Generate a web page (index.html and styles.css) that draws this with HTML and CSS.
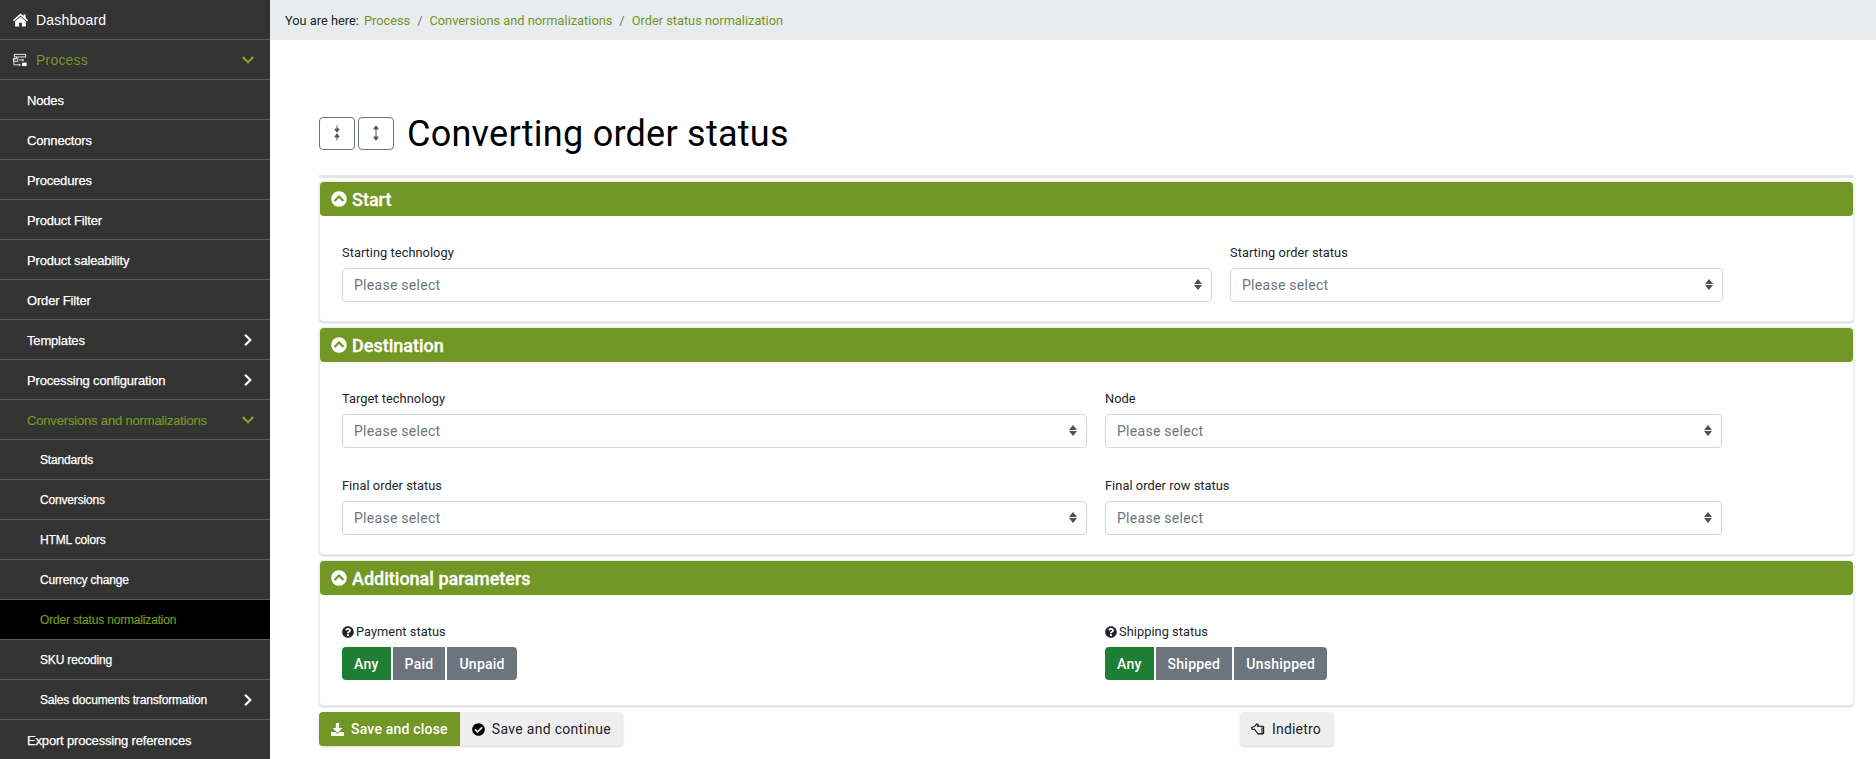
FILE: index.html
```html
<!DOCTYPE html>
<html lang="en">
<head>
<meta charset="utf-8">
<title>Converting order status</title>
<link rel="stylesheet" href="styles.css">
</head>
<body>
<div class="app">
<nav class="side">
  <a class="item top"><svg class="ic-home" viewBox="0 0 16 14"><path d="M8 0 0 7l1 1.200L8 2.400l7 5.800L16 7l-2.600-2.300V1h-2.200v1.800zM2.300 8.300V14h4.200v-4h3v4h4.200V8.300L8 3.600z"/></svg><span>Dashboard</span></a>
  <a class="item top on"><svg class="ic-proc" viewBox="0 0 16 14" fill="none" stroke="#fff" stroke-width="1"><rect x="1.500" y=".5" width="13" height="3"/><path d="M4 3.500v1.500M1 6h2M7 7h5M10.500 5.500 12 7l-1.500 1.500"/><rect x=".5" y="5.500" width="5" height="3"/><path d="M1 8.500v4h7M7 11l1.500 1.500L7 14"/><rect x="11" y="10.500" width="4" height="3" fill="#fff"/></svg><span>Process</span><svg class="chev" viewBox="0 0 12 12"><path d="M1.500 3.500 6 8l4.500-4.500"/></svg></a>
  <a class="item l1">Nodes</a>
  <a class="item l1">Connectors</a>
  <a class="item l1">Procedures</a>
  <a class="item l1">Product Filter</a>
  <a class="item l1">Product saleability</a>
  <a class="item l1">Order Filter</a>
  <a class="item l1"><span>Templates</span><svg class="chev" viewBox="0 0 12 12"><path d="M3.500 1.500 8 6l-4.500 4.500"/></svg></a>
  <a class="item l1"><span>Processing configuration</span><svg class="chev" viewBox="0 0 12 12"><path d="M3.500 1.500 8 6l-4.500 4.500"/></svg></a>
  <a class="item l1 on"><span>Conversions and normalizations</span><svg class="chev" viewBox="0 0 12 12"><path d="M1.500 3.500 6 8l4.500-4.500"/></svg></a>
  <a class="item l2">Standards</a>
  <a class="item l2">Conversions</a>
  <a class="item l2">HTML colors</a>
  <a class="item l2">Currency change</a>
  <a class="item l2 on cur">Order status normalization</a>
  <a class="item l2">SKU recoding</a>
  <a class="item l2"><span>Sales documents transformation</span><svg class="chev" viewBox="0 0 12 12"><path d="M3.500 1.500 8 6l-4.500 4.500"/></svg></a>
  <a class="item l1">Export processing references</a>
</nav>
<main class="main">
  <div class="crumbs"><span class="here">You are here:</span><a>Process</a><i>/</i><a>Conversions and normalizations</a><i>/</i><a>Order status normalization</a></div>
  <div class="content">
    <div class="head">
      <button class="tool"><svg viewBox="0 0 10 16"><path d="M5 .5v4M2.800 4 5 7.200 7.200 4zM5 15.500v-4M2.800 12 5 8.800 7.200 12z"/></svg></button>
      <button class="tool"><svg viewBox="0 0 10 16"><path d="M5 2v12M2.800 4 5 .8 7.200 4zM2.800 12 5 15.200 7.200 12z"/></svg></button>
      <h1>Converting order status</h1>
    </div>
    <div class="rule"></div>

    <section class="card">
      <h2 class="bar"><svg class="ic-up" viewBox="0 0 512 512"><path d="M8 256C8 119 119 8 256 8s248 111 248 248-111 248-248 248S8 393 8 256zm231-113.900L103.500 277.600c-9.400 9.400-9.400 24.600 0 33.900l17 17c9.400 9.400 24.600 9.400 33.900 0L256 226.900l101.600 101.600c9.400 9.400 24.600 9.400 33.900 0l17-17c9.400-9.400 9.400-24.600 0-33.900L273 142.100c-9.300-9.400-24.500-9.400-34 0z"/></svg>Start</h2>
      <div class="body">
        <div class="row r-start">
          <div class="field"><label>Starting technology</label><div class="sel">Please select</div></div>
          <div class="field"><label>Starting order status</label><div class="sel">Please select</div></div>
        </div>
      </div>
    </section>

    <section class="card">
      <h2 class="bar"><svg class="ic-up" viewBox="0 0 512 512"><path d="M8 256C8 119 119 8 256 8s248 111 248 248-111 248-248 248S8 393 8 256zm231-113.900L103.500 277.600c-9.400 9.400-9.400 24.600 0 33.900l17 17c9.400 9.400 24.600 9.400 33.900 0L256 226.900l101.600 101.600c9.400 9.400 24.600 9.400 33.900 0l17-17c9.400-9.400 9.400-24.600 0-33.900L273 142.100c-9.300-9.400-24.500-9.400-34 0z"/></svg>Destination</h2>
      <div class="body">
        <div class="row r-dest">
          <div class="field"><label>Target technology</label><div class="sel">Please select</div></div>
          <div class="field"><label>Node</label><div class="sel">Please select</div></div>
          <div class="field"><label>Final order status</label><div class="sel">Please select</div></div>
          <div class="field"><label>Final order row status</label><div class="sel">Please select</div></div>
        </div>
      </div>
    </section>

    <section class="card">
      <h2 class="bar"><svg class="ic-up" viewBox="0 0 512 512"><path d="M8 256C8 119 119 8 256 8s248 111 248 248-111 248-248 248S8 393 8 256zm231-113.900L103.500 277.600c-9.400 9.400-9.400 24.600 0 33.900l17 17c9.400 9.400 24.600 9.400 33.900 0L256 226.900l101.600 101.600c9.400 9.400 24.600 9.400 33.900 0l17-17c9.400-9.400 9.400-24.600 0-33.900L273 142.100c-9.300-9.400-24.500-9.400-34 0z"/></svg>Additional parameters</h2>
      <div class="body params">
        <div class="row r-dest">
          <div class="field"><label><svg class="ic-q" viewBox="0 0 512 512"><path d="M504 256c0 136.997-111.043 248-248 248S8 392.997 8 256C8 119.083 119.043 8 256 8s248 111.083 248 248zM262.655 90c-54.497 0-89.255 22.957-116.549 63.758-3.536 5.286-2.353 12.415 2.715 16.258l34.699 26.310c5.205 3.947 12.621 3.008 16.665-2.122 17.864-22.658 30.113-35.797 57.303-35.797 20.429 0 45.698 13.148 45.698 32.958 0 14.976-12.363 22.667-32.534 33.976C247.128 238.528 216 254.941 216 296v4c0 6.627 5.373 12 12 12h56c6.627 0 12-5.373 12-12v-1.333c0-28.462 83.186-29.647 83.186-106.667 0-58.002-60.165-102-116.531-102zM256 338c-25.365 0-46 20.635-46 46 0 25.364 20.635 46 46 46s46-20.636 46-46c0-25.365-20.635-46-46-46z"/></svg>Payment status</label>
            <div class="group"><span class="opt act">Any</span><span class="opt">Paid</span><span class="opt">Unpaid</span></div></div>
          <div class="field"><label><svg class="ic-q" viewBox="0 0 512 512"><path d="M504 256c0 136.997-111.043 248-248 248S8 392.997 8 256C8 119.083 119.043 8 256 8s248 111.083 248 248zM262.655 90c-54.497 0-89.255 22.957-116.549 63.758-3.536 5.286-2.353 12.415 2.715 16.258l34.699 26.310c5.205 3.947 12.621 3.008 16.665-2.122 17.864-22.658 30.113-35.797 57.303-35.797 20.429 0 45.698 13.148 45.698 32.958 0 14.976-12.363 22.667-32.534 33.976C247.128 238.528 216 254.941 216 296v4c0 6.627 5.373 12 12 12h56c6.627 0 12-5.373 12-12v-1.333c0-28.462 83.186-29.647 83.186-106.667 0-58.002-60.165-102-116.531-102zM256 338c-25.365 0-46 20.635-46 46 0 25.364 20.635 46 46 46s46-20.636 46-46c0-25.365-20.635-46-46-46z"/></svg>Shipping status</label>
            <div class="group"><span class="opt act">Any</span><span class="opt">Shipped</span><span class="opt">Unshipped</span></div></div>
        </div>
      </div>
    </section>

    <div class="actions">
      <button class="btn primary"><svg viewBox="0 0 512 512"><path d="M216 0h80c13.300 0 24 10.700 24 24v168h87.700c17.800 0 26.700 21.500 14.100 34.100L269.700 378.300c-7.500 7.500-19.800 7.500-27.300 0L90.100 226.100c-12.600-12.600-3.700-34.100 14.100-34.100H192V24c0-13.300 10.700-24 24-24zm296 376v112c0 13.300-10.700 24-24 24H24c-13.300 0-24-10.700-24-24V376c0-13.300 10.700-24 24-24h146.700l49 49c20.100 20.100 52.500 20.100 72.600 0l49-49H488c13.300 0 24 10.700 24 24z"/></svg>Save and close</button>
      <button class="btn light join"><svg viewBox="0 0 512 512"><path d="M504 256c0 136.967-111.033 248-248 248S8 392.967 8 256 119.033 8 256 8s248 111.033 248 248zM227.314 387.314l184-184c6.248-6.248 6.248-16.379 0-22.627l-22.627-22.627c-6.248-6.249-16.379-6.249-22.628 0L216 308.118l-70.059-70.059c-6.248-6.248-16.379-6.248-22.628 0l-22.627 22.627c-6.248 6.248-6.248 16.379 0 22.627l104 104c6.249 6.249 16.379 6.249 22.628.001z"/></svg>Save and continue</button>
      <button class="btn light back"><svg class="ic-hand" viewBox="0 0 16 14"><path d="M.8 5.300 4 4.200 6 1.500l1.700.9-.7 1.600h5.200l1.300 1v6.300l-1 .9H7.500L5.500 9.700 3.800 7.300 1 7.200z"/><path d="M11.800 5v7.200"/></svg>Indietro</button>
    </div>
  </div>
</main>
</div>
</body>
</html>
```
FILE: styles.css
```css
* { box-sizing: border-box; }
html, body { margin: 0; height: 759px; overflow: hidden; background: #fff; }
body { font-family: Roboto, "Liberation Sans", sans-serif; color: #212529; }
.app { display: flex; height: 759px; }

.side { width: 270px; flex: none; background: #333; font-family: "Liberation Sans", Arial, sans-serif; }
.item { display: flex; align-items: center; justify-content: space-between; height: 40px; border-bottom: 1px solid #5c5c5c; color: #fff; font-size: 13px; -webkit-text-stroke: .25px #fff; letter-spacing: -.17px; }
.item.on { color: #739724; -webkit-text-stroke: .2px #739724; }
.item.cur { background: #000; }
.top { justify-content: flex-start; padding-left: 13px; font-size: 14px; letter-spacing: .2px; -webkit-text-stroke: 0; }
.item.top.on { -webkit-text-stroke: 0; }
.top span { margin-left: 9px; }
.top .chev { margin-left: auto; }
.l1 { padding-left: 27px; padding-top: 1px; }
.l2 { padding-left: 40px; padding-top: 1px; font-size: 12px; }
.chev { width: 14px; height: 14px; margin-right: 15px; fill: none; stroke: #fff; stroke-width: 1.800; }
.on .chev { stroke: #7fa61f; }
.ic-home { width: 15px; height: 14px; margin-right: -1px; fill: #fff; }
.ic-proc { width: 14px; height: 14px; }

.main { flex: 1; min-width: 0; }
.crumbs { display: flex; align-items: center; height: 40px; background: #e9ecef; padding-left: 15px; font-size: 12.800px; color: #739724; white-space: nowrap; }
.crumbs .here { color: #212529; margin-right: 5px; }
.crumbs i { font-style: normal; color: #6c757d; margin: 0 7px; }

.content { padding: 76px 22px 0 49px; }
.head { display: flex; align-items: center; height: 34px; }
.tool { width: 36px; height: 33px; margin-right: 3px; padding: 0; border: 1px solid #6c757d; border-radius: 4px; background: #fff; display: flex; align-items: center; justify-content: center; }
.tool svg { width: 10px; height: 16px; fill: #555; stroke: #555; stroke-width: 1; }
h1 { margin: 2px 0 0 10px; font-size: 36px; font-weight: 400; color: #000; line-height: 34px; letter-spacing: .26px; }
.rule { height: 3px; margin-top: 25px; background: #e6e6e6; }

.card { margin-top: 3px; border: 1px solid #ececec; border-radius: 4px; background: #fff; box-shadow: 0 1px 2px rgba(0,0,0,.18); }
.card + .card { margin-top: 5px; }
.bar { display: flex; align-items: center; height: 34px; margin: 0; padding-left: 11px; background: #739724; border-radius: 4px; color: #fff; font-size: 18px; font-weight: 500; -webkit-text-stroke: .3px #fff; }
.ic-up { width: 16px; height: 16px; margin-right: 5px; fill: #fff; }
.body { padding: 28px 22px 19px; }
.body.params { padding-bottom: 25px; }
.row { display: grid; width: 1380px; }
.r-start { grid-template-columns: 870px 493px; column-gap: 18px; }
.r-dest { grid-template-columns: 745px 617px; column-gap: 18px; row-gap: 29px; }
label { display: block; height: 24px; font-size: 12.800px; line-height: 18px; letter-spacing: .05px; color: #212529; }
.sel { position: relative; height: 34px; padding-left: 11px; border: 1px solid #d5d8db; border-radius: 4px; font-size: 14px; line-height: 32px; color: #6c757d; letter-spacing: .28px; }
.sel::before, .sel::after { content: ""; position: absolute; right: 9px; border: 4px solid transparent; }
.sel::before { top: 10px; border-bottom: 5px solid #495057; border-top: 0; }
.sel::after { top: 16px; border-top: 5px solid #495057; border-bottom: 0; }
.ic-q { width: 12px; height: 12px; margin-right: 2px; vertical-align: -2px; fill: #212529; }

.group { display: flex; gap: 2px; }
.opt { height: 33px; padding: 0 12px; background: #6c757d; color: #fff; font-size: 14px; font-weight: 500; line-height: 35px; letter-spacing: .25px; }
.opt:first-child { border-radius: 4px 0 0 4px; }
.opt:last-child { border-radius: 0 4px 4px 0; }
.opt.act { background: #1e7e34; }

.actions { display: flex; margin-top: 6px; }
.btn { display: flex; align-items: center; height: 34px; padding: 0 12px; border: 0; border-radius: 4px; font-family: inherit; font-size: 14px; box-shadow: 0 1px 2px rgba(0,0,0,.15); letter-spacing: .3px; }
.btn svg { width: 13px; height: 13px; margin-right: 7px; }
.primary { background: #739724; color: #fff; font-weight: 500; border-radius: 4px 0 0 4px; letter-spacing: .2px; }
.primary svg { fill: #fff; }
.light { background: #eee; color: #212529; }
.light svg { fill: #000; }
.join { border-radius: 0 4px 4px 0; }
.back { margin-left: 617px; padding: 0 13px 0 11px; letter-spacing: .2px; }
.back svg.ic-hand { width: 15px; height: 14px; margin-right: 6px; fill: none; stroke: #000; stroke-width: 1.100; }
```
